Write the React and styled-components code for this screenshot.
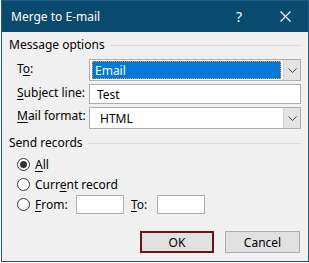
import React from "react";
import styled, { createGlobalStyle } from "styled-components";

const GlobalStyle = createGlobalStyle`
  html, body {
    margin: 0;
    padding: 0;
    background: #ffffff;
  }
  body {
    font-family: "Segoe UI", "Noto Sans", "Liberation Sans", sans-serif;
    font-size: 12px;
    color: #000000;
  }
`;

const Window = styled.div`
  width: 306px;
  height: 260px;
  margin-left: 1px;
  border: 1px solid #1e5a84;
  background: #f0f0f0;
  display: flex;
  flex-direction: column;
`;

const TitleBar = styled.div`
  height: 31px;
  flex: none;
  background: #0b4a6f;
  color: #ffffff;
  display: flex;
  align-items: center;
  padding-left: 9px;
  font-size: 12px;
`;

const TitleText = styled.div`
  flex: 1;
`;

const TitleButton = styled.div`
  width: ${(p) => p.$w}px;
  height: 31px;
  display: flex;
  align-items: center;
  justify-content: center;
  font-size: 14px;
`;

const Body = styled.div`
  flex: 1;
  padding: 5px 7px 0 7px;
  display: flex;
  flex-direction: column;
`;

const GroupHeader = styled.div`
  display: flex;
  align-items: center;
  height: 16px;
  line-height: 16px;
  &::after {
    content: "";
    flex: 1;
    height: 1px;
    margin-left: 5px;
    background: #dcdcdc;
  }
`;

const FieldGrid = styled.div`
  display: grid;
  grid-template-columns: 72px 212px;
  row-gap: 3px;
  margin-top: 6px;
  padding-left: 8px;
  align-items: center;
`;

const Label = styled.span`
  white-space: nowrap;
  line-height: 16px;
  align-self: start;
  padding-top: ${(p) => p.$top || 0}px;
`;

const Key = styled.span`
  text-decoration: underline;
  text-underline-offset: 2px;
`;

const Combo = styled.div`
  height: 22px;
  box-sizing: border-box;
  border: 1px solid #adadad;
  background: #ffffff;
  display: flex;
  padding: 1px 0 1px 2px;
`;

const ComboValue = styled.div`
  flex: 1;
  display: flex;
  align-items: center;
  padding-left: ${(p) => (p.$selected ? 2 : 8)}px;
  margin-right: 2px;
  box-sizing: border-box;
  background: ${(p) => (p.$selected ? "#0078d7" : "transparent")};
  color: ${(p) => (p.$selected ? "#ffffff" : "#000000")};
  border: ${(p) => (p.$selected ? "1px dotted #f39b2c" : "none")};
`;

const ComboButton = styled.div`
  width: 16px;
  margin: -1px 0;
  background: #e3e3e3;
  border-left: 1px solid #d0d0d0;
  display: flex;
  align-items: center;
  justify-content: center;
`;

const TextBox = styled.div`
  height: ${(p) => p.$h || 20}px;
  width: ${(p) => (p.$w ? `${p.$w}px` : "auto")};
  box-sizing: border-box;
  border: 1px solid #adadad;
  background: #ffffff;
  display: flex;
  align-items: center;
  padding-left: 7px;
`;

const SecondHeader = styled(GroupHeader)`
  margin-top: 6px;
`;

const RadioList = styled.div`
  margin-top: 3px;
  padding-left: 8px;
  display: flex;
  flex-direction: column;
`;

const RadioRow = styled.div`
  height: ${(p) => p.$h || 20}px;
  display: flex;
  align-items: center;
`;

const RadioCircle = styled.span`
  width: 13px;
  height: 13px;
  box-sizing: border-box;
  border: 1px solid #333333;
  border-radius: 50%;
  background: #ffffff;
  display: flex;
  align-items: center;
  justify-content: center;
  margin-right: 5px;
  &::after {
    content: "";
    width: 7px;
    height: 7px;
    border-radius: 50%;
    background: ${(p) => (p.$checked ? "#333333" : "transparent")};
  }
`;

const RadioLabel = styled.span`
  width: ${(p) => (p.$w ? `${p.$w}px` : "auto")};
  margin-left: ${(p) => p.$ml || 0}px;
  white-space: nowrap;
`;

const ButtonRow = styled.div`
  margin-top: 16px;
  display: flex;
  justify-content: flex-end;
  gap: 11px;
  padding-right: 1px;
`;

const Button = styled.div`
  width: ${(p) => p.$w}px;
  height: 22px;
  box-sizing: border-box;
  background: #e1e1e1;
  border: ${(p) => (p.$default ? "2px solid #6d1313" : "1px solid #adadad")};
  display: flex;
  align-items: center;
  justify-content: center;
`;

const Chevron = () => (
  <svg width="9" height="5" viewBox="0 0 9 5">
    <polyline points="0.5,0.5 4.5,4.5 8.5,0.5" fill="none" stroke="#444" strokeWidth="1" />
  </svg>
);

const CloseIcon = () => (
  <svg width="11" height="11" viewBox="0 0 11 11">
    <path d="M0.5 0.5 L10.5 10.5 M10.5 0.5 L0.5 10.5" stroke="#ffffff" strokeWidth="1.1" />
  </svg>
);

export default function App() {
  return (
    <>
      <GlobalStyle />
      <Window>
        <TitleBar>
          <TitleText>Merge to E-mail</TitleText>
          <TitleButton $w={46}>?</TitleButton>
          <TitleButton $w={46}>
            <CloseIcon />
          </TitleButton>
        </TitleBar>
        <Body>
          <GroupHeader>Message options</GroupHeader>
          <FieldGrid>
            <Label $top={2}>
              T<Key>o</Key>:
            </Label>
            <Combo>
              <ComboValue $selected>Email</ComboValue>
              <ComboButton>
                <Chevron />
              </ComboButton>
            </Combo>
            <Label $top={1}>
              <Key>S</Key>ubject line:
            </Label>
            <TextBox>Test</TextBox>
            <Label $top={1}>
              <Key>M</Key>ail format:
            </Label>
            <Combo>
              <ComboValue>HTML</ComboValue>
              <ComboButton>
                <Chevron />
              </ComboButton>
            </Combo>
          </FieldGrid>
          <SecondHeader>Send records</SecondHeader>
          <RadioList>
            <RadioRow>
              <RadioCircle $checked />
              <RadioLabel>
                <Key>A</Key>ll
              </RadioLabel>
            </RadioRow>
            <RadioRow>
              <RadioCircle />
              <RadioLabel>
                Curr<Key>e</Key>nt record
              </RadioLabel>
            </RadioRow>
            <RadioRow $h={21}>
              <RadioCircle />
              <RadioLabel $w={41}>
                <Key>F</Key>rom:
              </RadioLabel>
              <TextBox $w={48} $h={19} />
              <RadioLabel $w={26} $ml={7}>
                <Key>T</Key>o:
              </RadioLabel>
              <TextBox $w={48} $h={19} />
            </RadioRow>
          </RadioList>
          <ButtonRow>
            <Button $w={74} $default>
              OK
            </Button>
            <Button $w={75}>Cancel</Button>
          </ButtonRow>
        </Body>
      </Window>
    </>
  );
}
